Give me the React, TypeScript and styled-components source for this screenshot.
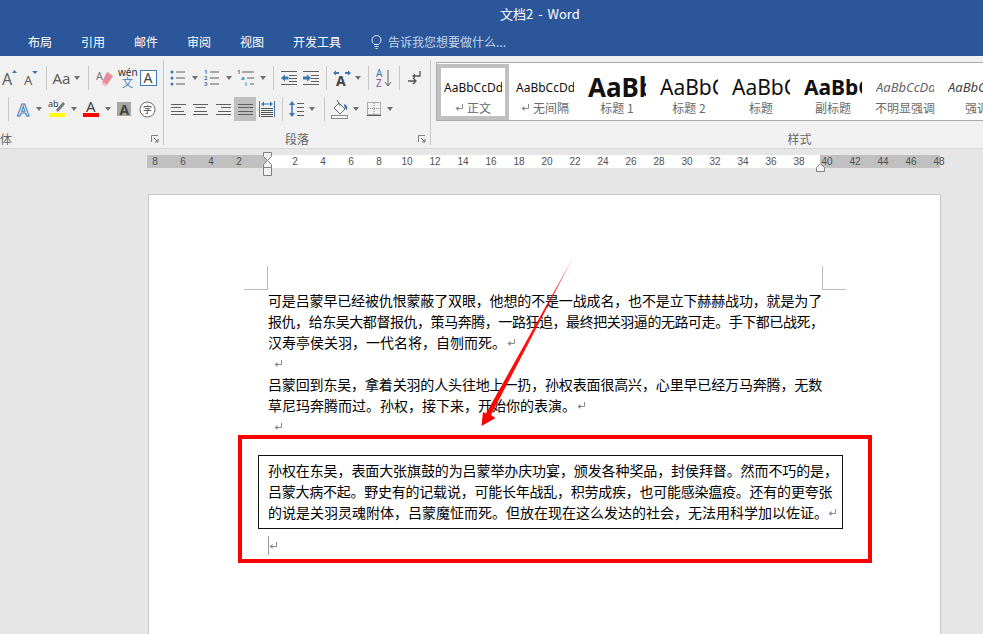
import styled, { createGlobalStyle } from "styled-components";

const sans = `"Noto Sans CJK SC", "Noto Sans", sans-serif`;
const latin = `"Noto Sans", "Noto Sans CJK SC", sans-serif`;
const blue = "#3f78b5";
const ink = "#5f5f5f";

const Global = createGlobalStyle`
  html, body {
    margin: 0;
    background: #e6e6e6;
  }

  svg {
    overflow: visible;
  }
`;

const Screen = styled.div`
  position: relative;
  width: 983px;
  height: 634px;
  overflow: hidden;
  background: #e6e6e6;
  font-family: ${sans};
`;

const TitleBar = styled.header`
  background: #2b579a;
  height: 56px;
  color: #fff;
`;

const TitleRow = styled.div`
  height: 28px;
  padding-left: 500px;
  font-size: 13px;
  word-spacing: 2px;
  line-height: 27px;
`;

const Tabs = styled.nav`
  height: 28px;
  box-sizing: border-box;
  padding: 0 0 2px 28px;
  display: flex;
  align-items: center;
  gap: 29px;
  font-size: 12px;
`;

const TellMe = styled.div`
  display: flex;
  align-items: center;
  gap: 5px;
  color: #c5d3e6;
  font-size: 12px;
`;

const Ribbon = styled.section`
  display: flex;
  height: 93px;
  padding-top: 4px;
  box-sizing: border-box;
  background: #f1f1f1;
  border-bottom: 1px solid #d6d6d6;
`;

const Group = styled.div<{ $w: number; $line?: boolean }>`
  flex: 0 0 ${(p) => p.$w}px;
  box-sizing: border-box;
  height: 85px;
  padding-top: 6px;
  border-right: ${(p) => (p.$line ? "1px solid #c8c8c8" : "none")};
  display: flex;
  flex-direction: column;
  gap: 7px;
`;

const Row = styled.div<{ $pad?: number }>`
  display: flex;
  align-items: center;
  height: 24px;
  padding-left: ${(p) => p.$pad ?? 0}px;
`;

const Tool = styled.div<{ $w: number; $on?: boolean }>`
  flex: 0 0 ${(p) => p.$w}px;
  height: 24px;
  display: flex;
  align-items: center;
  justify-content: center;
  background: ${(p) => (p.$on ? "#c0c0c0" : "transparent")};
`;

const Caret = styled.span<{ $after?: number }>`
  flex: 0 0 10px;
  height: 4px;
  margin-right: ${(p) => p.$after ?? 0}px;
  display: flex;
  justify-content: center;

  &::before {
    content: "";
    border-left: 3.5px solid transparent;
    border-right: 3.5px solid transparent;
    border-top: 4px solid #707070;
  }
`;

const Sep = styled.span<{ $l: number; $r: number }>`
  flex: 0 0 1px;
  height: 24px;
  margin: 0 ${(p) => p.$r}px 0 ${(p) => p.$l}px;
  background: #c8c8c8;
`;

const CaseText = styled.span`
  font-family: ${latin};
  font-size: 15px;
  color: ${ink};
`;

const GroupLabel = styled.div<{ $left?: number }>`
  position: relative;
  height: 16px;
  margin-top: 3px;
  padding-left: ${(p) => p.$left ?? 0}px;
  font-size: 12px;
  line-height: 16px;
  color: #666;
  text-align: ${(p) => (p.$left === undefined ? "center" : "left")};
`;

const StylesLabel = styled(GroupLabel)`
  margin-top: 10px;
`;

const Launcher = styled.svg`
  position: absolute;
  right: 4px;
  top: 4px;
`;

const StylesGroup = styled(Group)`
  padding: 2px 0 0 5px;
  gap: 0;
`;

const Gallery = styled.div`
  display: flex;
  height: 59px;
  padding-top: 1px;
  box-sizing: border-box;
  width: 727px;
  background: #fff;
  border: 1px solid #ababab;
`;

const StyleItem = styled.div<{ $on?: boolean }>`
  flex: 0 0 72px;
  min-width: 0;
  box-sizing: border-box;
  height: 56px;
  padding: 0 7px;
  box-shadow: ${(p) => (p.$on ? "inset 0 0 0 4px #c0c0c0" : "none")};
  display: flex;
  flex-direction: column;
  align-items: stretch;
`;

const Preview = styled.div<{ $size: number; $bold?: boolean; $italic?: boolean; $color?: string }>`
  height: 25px;
  margin-top: 11px;
  overflow: hidden;
  white-space: nowrap;
  font-family: ${latin};
  font-size: ${(p) => p.$size}px;
  font-weight: ${(p) => (p.$bold ? 700 : 400)};
  font-style: ${(p) => (p.$italic ? "italic" : "normal")};
  color: ${(p) => p.$color ?? "#111"};
  line-height: 25px;
`;

const StyleName = styled.div`
  display: flex;
  justify-content: center;
  align-items: center;
  gap: 3px;
  height: 15px;
  font-size: 12px;
  line-height: 15px;
  color: #6a6a6a;
  white-space: nowrap;
`;

const RulerBar = styled.div`
  position: relative;
  height: 13px;
  width: 793px;
  margin: 6px 0 0 147px;
  background: linear-gradient(
    to right,
    #c0c0c0 0 120px,
    #fff 120px 673px,
    #c0c0c0 673px
  );
`;

const RulerTicks = styled.div`
  display: flex;
  margin-left: -6px;
`;

const Tick = styled.span`
  flex: 0 0 28px;
  text-align: center;
  font-family: "Liberation Sans", sans-serif;
  font-size: 10px;
  line-height: 13px;
  color: #505050;
`;

const RulerMark = styled.svg<{ $x: number; $y: number }>`
  position: absolute;
  left: ${(p) => p.$x}px;
  top: ${(p) => p.$y}px;
`;

const Page = styled.main`
  position: relative;
  box-sizing: border-box;
  width: 793px;
  height: 460px;
  margin: 26px 0 0 148px;
  padding: 95px 0 0 119px;
  background: #fff;
  border: 1px solid #c9c9c9;
  font-size: 14px;
  line-height: 21px;
  color: #000;
`;

const CropMark = styled.span<{ $side: "left" | "right" }>`
  position: absolute;
  top: 71px;
  ${(p) => (p.$side === "left" ? "left: 95px;" : "left: 673px;")}
  width: 23px;
  height: 23px;
  border-bottom: 1px solid #bbb;
  ${(p) => (p.$side === "left" ? "border-right: 1px solid #bbb;" : "border-left: 1px solid #bbb;")}
`;

const Line = styled.div<{ $ls?: number }>`
  display: flex;
  align-items: center;
  height: 21px;
  white-space: nowrap;
  letter-spacing: ${(p) => p.$ls ?? 0}px;
`;

const EmptyLine = styled.div<{ $indent: number; $top?: number }>`
  position: relative;
  display: flex;
  align-items: center;
  height: 21px;
  margin-top: ${(p) => p.$top ?? 0}px;
  padding-left: ${(p) => p.$indent}px;
`;

const BoxedText = styled.div`
  width: 585px;
  box-sizing: border-box;
  margin: 18px 0 0 -10px;
  padding: 4px 9px 5px;
  border: 1px solid #111;
`;

const Cursor = styled.span`
  position: absolute;
  left: 0;
  top: 1px;
  width: 1px;
  height: 19px;
  background: #999;
`;

const RedFrame = styled.div`
  position: absolute;
  left: 238px;
  top: 435px;
  width: 634px;
  height: 128px;
  box-sizing: border-box;
  border: 4px solid #f00;
`;

const ArrowLayer = styled.svg`
  position: absolute;
  left: 0;
  top: 0;
`;

const ReturnMark = ({ gap = 4 }: { gap?: number }) => (
  <svg width="9" height="9" viewBox="0 0 9 9" style={{ marginLeft: gap, flex: "none" }}>
    <path d="M7.5 1v4.5H2" fill="none" stroke="#8a8a8a" />
    <path d="M0.5 5.5L3.5 3v5z" fill="#8a8a8a" />
  </svg>
);

const Svg = ({ w = 20, h = 20, children }: { w?: number; h?: number; children: React.ReactNode }) => (
  <svg width={w} height={h} viewBox={`0 0 ${w} ${h}`}>
    {children}
  </svg>
);

const L = ({ x, y, s = 14, c = ink, b = false, t = "A" }: { x: number; y: number; s?: number; c?: string; b?: boolean; t?: string }) => (
  <text x={x} y={y} fontSize={s} fill={c} fontWeight={b ? 700 : 400} fontFamily='"Noto Sans", "Noto Sans CJK SC", sans-serif'>
    {t}
  </text>
);

const Bars = ({ x, ys, w, c = ink }: { x: number; ys: number[]; w: number; c?: string }) => (
  <path d={ys.map((y) => `M${x} ${y}h${w}`).join("")} stroke={c} strokeWidth="1" fill="none" />
);

const Grow = () => (
  <Svg>
    <L x={2} y={17} s={16} />
    <path d="M12 5l2.5-3 2.5 3z" fill={blue} />
  </Svg>
);
const Shrink = () => (
  <Svg>
    <L x={3} y={17} s={13} />
    <path d="M11 3h6l-3 3z" fill={blue} />
  </Svg>
);
const Eraser = () => (
  <Svg w={22}>
    <L x={2} y={12} s={11} c="#777" />
    <path d="M13 4l6 4-6 9-5-3z" fill="#e98a98" />
    <path d="M8 14l5 3-1 2-5-3z" fill="#f4c6cd" />
  </Svg>
);
const Pinyin = () => (
  <Svg w={20} h={22}>
    <L x={1} y={9} s={10} c="#333" t="wén" />
    <L x={5} y={20} s={11} c={blue} t="文" />
  </Svg>
);
const BoxA = () => (
  <svg width="17" height="16" viewBox="0 0 17 16">
    <rect x="0.5" y="0.5" width="16" height="15" fill="#fff" stroke={blue} />
    <L x={3.5} y={13} s={14} c="#444" />
  </svg>
);
const GlowA = () => (
  <Svg>
    <text x="3" y="17" fontSize="17" fontFamily="Liberation Sans" fontWeight="700" fill="#fff" stroke={blue} strokeWidth="1">
      A
    </text>
  </Svg>
);
const Highlight = () => (
  <Svg w={18} h={22}>
    <L x={0} y={9} s={9} c="#444" t="ab" />
    <path d="M8 12l7-8 2 2-7 8z" fill="#777" />
    <rect x="1" y="15" width="16" height="4" fill="#ff0" />
  </Svg>
);
const FontColor = () => (
  <Svg w={18} h={22}>
    <L x={4} y={14} s={15} c="#444" />
    <rect x="1" y="15" width="16" height="4" fill="#f00" />
  </Svg>
);
const ShadedA = () => (
  <Svg w={16} h={16}>
    <rect width="14" height="14" y="1" fill="#a6a6a6" />
    <L x={2.5} y={13.5} s={14} c="#444" b />
  </Svg>
);
const Phonetic = () => (
  <Svg w={17} h={17}>
    <circle cx="8.5" cy="8.5" r="7.5" fill="#fff" stroke="#666" />
    <L x={4} y={12} s={9} c="#444" t="字" />
  </Svg>
);
const Bullets = () => (
  <Svg w={16} h={18}>
    <circle cx="2" cy="3" r="1.5" fill={blue} />
    <circle cx="2" cy="9" r="1.5" fill={blue} />
    <circle cx="2" cy="15" r="1.5" fill={blue} />
    <Bars x={6} ys={[3, 9, 15]} w={9} />
  </Svg>
);
const Numbered = () => (
  <Svg w={16} h={18}>
    <L x={0} y={5} s={6} c={blue} b t="1" />
    <L x={0} y={11} s={6} c={blue} b t="2" />
    <L x={0} y={17} s={6} c={blue} b t="3" />
    <Bars x={6} ys={[3, 9, 15]} w={9} />
  </Svg>
);
const MultiLevel = () => (
  <Svg w={18} h={18}>
    <L x={0} y={5} s={6} c={blue} b t="1" />
    <L x={4} y={11} s={6} c={blue} b t="a" />
    <L x={8} y={17} s={6} c={blue} b t="i" />
    <Bars x={5} ys={[3]} w={12} />
    <Bars x={10} ys={[9]} w={7} />
    <Bars x={13} ys={[15]} w={4} />
  </Svg>
);
const Outdent = () => (
  <Svg w={16} h={14}>
    <Bars x={0} ys={[0.5, 13.5]} w={16} />
    <Bars x={8} ys={[4.5, 7.5, 10.5]} w={8} />
    <path d="M0 7l4-3.5v2h3.5v3H4v2z" fill={blue} />
  </Svg>
);
const Indent = () => (
  <Svg w={16} h={14}>
    <Bars x={0} ys={[0.5, 13.5]} w={16} />
    <Bars x={8} ys={[4.5, 7.5, 10.5]} w={8} />
    <path d="M8 7L4 3.5v2H0v3h4v2z" fill={blue} />
  </Svg>
);
const Asian = () => (
  <Svg w={18} h={18}>
    <L x={3} y={17} s={14} c="#444" b />
    <path d="M0 4l3-2.500v1.500h3v2H3v1.500zM18 4l-3-2.500v1.500h-3v2h3v1.500z" fill={blue} />
  </Svg>
);
const Sort = () => (
  <Svg w={18} h={20}>
    <L x={1} y={9} s={10} c={blue} t="A" />
    <L x={1} y={19} s={10} c="#8a5aab" t="Z" />
    <path d="M13 2v15M10 14l3 4 3-4" fill="none" stroke={ink} />
  </Svg>
);
const Marks = () => (
  <Svg w={16} h={18}>
    <path d="M12 2v5H6" fill="none" stroke="#555" strokeWidth="1.300" />
    <path d="M4 7l3-2.500v5z" fill="#555" />
    <path d="M0 12h8M5 9l3 3-3 3" fill="none" stroke="#555" strokeWidth="1.300" />
  </Svg>
);
const AlignIcon = ({ x2, x3 }: { x2: number; x3: number }) => (
  <Svg w={15} h={11}>
    <Bars x={0} ys={[0.5, 10.5]} w={15} />
    <Bars x={x2} ys={[3.5]} w={10} />
    <Bars x={x3} ys={[7.5]} w={13} />
  </Svg>
);
const JustifyIcon = () => (
  <Svg w={15} h={11}>
    <Bars x={0} ys={[0.5, 3.5, 7.5, 10.5]} w={15} />
  </Svg>
);
const Distribute = () => (
  <Svg w={16} h={16}>
    <path d="M0.500 0v16M15.500 0v16" stroke={blue} />
    <path d="M2 3l3-2.500v2h6v-2l3 2.500-3 2.500v-2H5v2z" fill={blue} />
    <Bars x={2} ys={[7.5, 9.5, 11.5, 13.5, 15.5]} w={12} c="#555" />
  </Svg>
);
const LineSpacing = () => (
  <Svg w={15} h={18}>
    <path d="M3 3v12" stroke={blue} strokeWidth="1.500" />
    <path d="M0 5l3-4 3 4zM0 13l3 4 3-4z" fill={blue} />
    <Bars x={8} ys={[3.5, 7.5, 11.5, 15.5]} w={7} />
  </Svg>
);
const Shading = () => (
  <Svg w={18} h={20}>
    <path d="M3 9l5-5 6 6-5 5z" fill="#fff" stroke="#666" />
    <path d="M6 1l3 6" stroke="#666" />
    <path d="M13 5c3 1 4 3 3 6-2-1-3-3-3-6z" fill={blue} />
    <rect x="0.500" y="16.500" width="16" height="3" fill="#fff" stroke="#888" />
  </Svg>
);
const BordersIcon = () => (
  <svg width="14" height="14" viewBox="0 0 14 14">
    <rect x="0.500" y="0.500" width="13" height="12" fill="none" stroke="#666" strokeDasharray="1 1" />
    <path d="M7 1v12M1 6.500h12" stroke="#888" strokeDasharray="1 1" />
    <path d="M0 13.500h14" stroke="#555" />
  </svg>
);
const LauncherIcon = () => (
  <Launcher width="8" height="8" viewBox="0 0 8 8">
    <path d="M0.500 7V0.500H7" fill="none" stroke="#808080" />
    <path d="M3 3l4 4M7 4v3H4" fill="none" stroke="#707070" />
  </Launcher>
);

const ticks = ["8", "6", "4", "2", "", ...Array.from({ length: 24 }, (_, i) => String((i + 1) * 2))];

const styleItems = [
  { name: "正文", size: 12, mark: true, on: true },
  { name: "无间隔", size: 12, mark: true },
  { name: "标题 1", size: 26, bold: true, text: "AaBb" },
  { name: "标题 2", size: 21, text: "AaBbC" },
  { name: "标题", size: 21, text: "AaBbC" },
  { name: "副标题", size: 21, bold: true, text: "AaBbC" },
  { name: "不明显强调", size: 13, italic: true, color: "#666", text: "AaBbCcDd" },
  { name: "强调", size: 13, italic: true, color: "#444", text: "AaBbCcDd" },
];

export default function App() {
  return (
    <Screen>
      <Global />
      <TitleBar>
        <TitleRow>文档2 - Word</TitleRow>
        <Tabs>
          <span>布局</span>
          <span>引用</span>
          <span>邮件</span>
          <span>审阅</span>
          <span>视图</span>
          <span>开发工具</span>
          <TellMe>
            <svg width="13" height="15" viewBox="0 0 13 15">
              <path d="M4.500 10.500C3 9 2 8 2 6a4.500 4.500 0 0 1 9 0c0 2-1 3-2.500 4.500zM4.500 12.500h4M5.500 14.500h2" fill="none" stroke="#e4ebf4" />
            </svg>
            告诉我您想要做什么...
          </TellMe>
        </Tabs>
      </TitleBar>

      <Ribbon>
        <Group $w={164} $line>
          <Row>
            <Tool $w={20}><Grow /></Tool>
            <Tool $w={22}><Shrink /></Tool>
            <Sep $l={4} $r={4} />
            <Tool $w={21}><CaseText>Aa</CaseText></Tool>
            <Caret />
            <Sep $l={6} $r={5} />
            <Tool $w={22}><Eraser /></Tool>
            <Tool $w={21}><Pinyin /></Tool>
            <Tool $w={22}><BoxA /></Tool>
          </Row>
          <Row>
            <Sep $l={8} $r={5} />
            <Tool $w={20}><GlowA /></Tool>
            <Caret $after={1} />
            <Tool $w={24}><Highlight /></Tool>
            <Caret />
            <Tool $w={24}><FontColor /></Tool>
            <Caret $after={1} />
            <Tool $w={22}><ShadedA /></Tool>
            <Tool $w={22}><Phonetic /></Tool>
          </Row>
          <GroupLabel $left={0}>
            体
            <LauncherIcon />
          </GroupLabel>
        </Group>

        <Group $w={267} $line>
          <Row $pad={2}>
            <Tool $w={24}><Bullets /></Tool>
            <Caret />
            <Tool $w={24}><Numbered /></Tool>
            <Caret />
            <Tool $w={24}><MultiLevel /></Tool>
            <Caret />
            <Sep $l={5} $r={4} />
            <Tool $w={22}><Outdent /></Tool>
            <Tool $w={22}><Indent /></Tool>
            <Sep $l={4} $r={4} />
            <Tool $w={22}><Asian /></Tool>
            <Caret />
            <Sep $l={5} $r={4} />
            <Tool $w={22}><Sort /></Tool>
            <Sep $l={4} $r={5} />
            <Tool $w={22}><Marks /></Tool>
          </Row>
          <Row $pad={3}>
            <Tool $w={22}><AlignIcon x2={0} x3={0} /></Tool>
            <Tool $w={23}><AlignIcon x2={2.5} x3={1} /></Tool>
            <Tool $w={22}><AlignIcon x2={5} x3={2} /></Tool>
            <Tool $w={22} $on><JustifyIcon /></Tool>
            <Tool $w={22}><Distribute /></Tool>
            <Sep $l={4} $r={2} />
            <Tool $w={22}><LineSpacing /></Tool>
            <Caret $after={7} />
            <Sep $l={0} $r={4} />
            <Tool $w={22}><Shading /></Tool>
            <Caret $after={2} />
            <Tool $w={22}><BordersIcon /></Tool>
            <Caret />
          </Row>
          <GroupLabel>
            段落
            <LauncherIcon />
          </GroupLabel>
        </Group>

        <StylesGroup $w={732}>
          <Gallery>
            {styleItems.map((item) => (
              <StyleItem key={item.name} $on={item.on}>
                <Preview $size={item.size} $bold={item.bold} $italic={item.italic} $color={item.color}>
                  {item.text ?? "AaBbCcDd"}
                </Preview>
                <StyleName>
                  {item.mark && <ReturnMark gap={0} />}
                  {item.name}
                </StyleName>
              </StyleItem>
            ))}
          </Gallery>
          <StylesLabel>样式</StylesLabel>
        </StylesGroup>
      </Ribbon>

      <RulerBar>
        <RulerTicks>
          {ticks.map((t, i) => (
            <Tick key={i}>{t}</Tick>
          ))}
        </RulerTicks>
        <RulerMark $x={116} $y={-3} width="9" height="25" viewBox="0 0 9 25">
          <path d="M0.500 0.500h8v4l-4 4-4-4zM4.500 8.500l4 4v3h-8v-3zM0.500 15.500h8v8h-8z" fill="#f1f1f1" stroke="#808080" />
        </RulerMark>
        <RulerMark $x={669} $y={8} width="9" height="9" viewBox="0 0 9 9">
          <path d="M0.500 8.500v-4l4-4 4 4v4z" fill="#f1f1f1" stroke="#808080" />
        </RulerMark>
      </RulerBar>

      <Page>
        <CropMark $side="left" />
        <CropMark $side="right" />
        <Line $ls={-0.15}>可是吕蒙早已经被仇恨蒙蔽了双眼，他想的不是一战成名，也不是立下赫赫战功，就是为了</Line>
        <Line $ls={-0.45}>报仇，给东吴大都督报仇，策马奔腾，一路狂追，最终把关羽逼的无路可走。手下都已战死，</Line>
        <Line>汉寿亭侯关羽，一代名将，自刎而死。<ReturnMark gap={1} /></Line>
        <EmptyLine $indent={6}><ReturnMark gap={0} /></EmptyLine>
        <Line $ls={-0.15}>吕蒙回到东吴，拿着关羽的人头往地上一扔，孙权表面很高兴，心里早已经万马奔腾，无数</Line>
        <Line>草尼玛奔腾而过。孙权，接下来，开始你的表演。<ReturnMark gap={1} /></Line>
        <EmptyLine $indent={6}><ReturnMark gap={0} /></EmptyLine>
        <BoxedText>
          <Line $ls={-0.1}>孙权在东吴，表面大张旗鼓的为吕蒙举办庆功宴，颁发各种奖品，封侯拜督。然而不巧的是，</Line>
          <Line $ls={-0.24}>吕蒙大病不起。野史有的记载说，可能长年战乱，积劳成疾，也可能感染瘟疫。还有的更夸张</Line>
          <Line>的说是关羽灵魂附体，吕蒙魔怔而死。但放在现在这么发达的社会，无法用科学加以佐证。<ReturnMark gap={0} /></Line>
        </BoxedText>
        <EmptyLine $indent={1} $top={6}>
          <Cursor />
          <ReturnMark gap={0} />
        </EmptyLine>
      </Page>

      <RedFrame />
      <ArrowLayer width="983" height="634" viewBox="0 0 983 634">
        <defs>
          <linearGradient id="tail" x1="575" y1="254" x2="484" y2="420" gradientUnits="userSpaceOnUse">
            <stop offset="0" stopColor="#ff0000" stopOpacity="0.3" />
            <stop offset="0.3" stopColor="#ff0000" stopOpacity="0.9" />
            <stop offset="1" stopColor="#ff0000" />
          </linearGradient>
        </defs>
        <path d="M575 254L491 415L495.500 418L481.500 426L483 412L486 413.500Z" fill="url(#tail)" />
      </ArrowLayer>
    </Screen>
  );
}
